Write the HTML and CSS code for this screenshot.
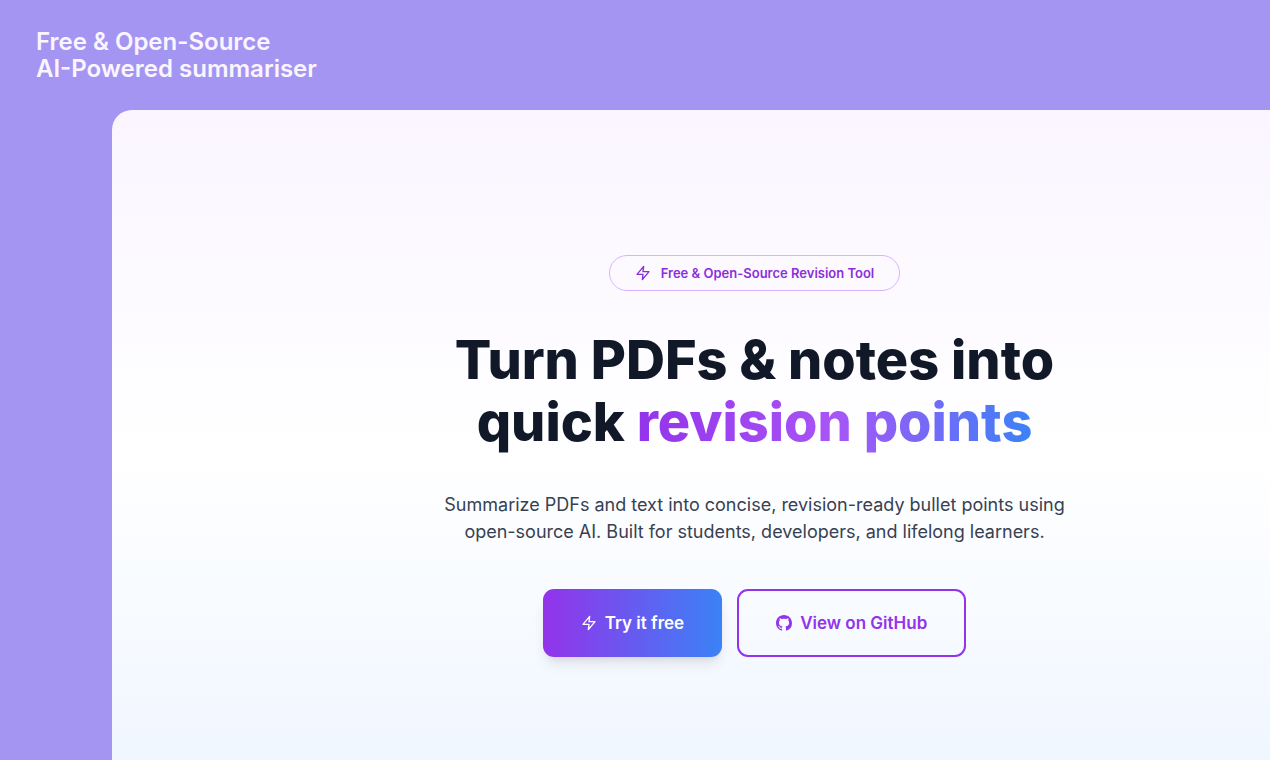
FILE: index.html
```html
<!DOCTYPE html>
<html lang="en">
<head>
  <meta charset="UTF-8" />
  <meta name="viewport" content="width=device-width, initial-scale=1.0" />
  <title>Free &amp; Open-Source AI-Powered summariser</title>
  <link rel="stylesheet" href="styles.css">
</head>
<body>
  <header class="banner">
    <p class="banner-title">Free &amp; Open-Source<br>AI-Powered summariser</p>
  </header>

  <main class="stage">
    <section class="hero">
      <div class="badge">
        <svg class="icon" viewBox="0 0 24 24" aria-hidden="true">
          <path d="M13 2 3 14h9l-1 8 10-12h-9l1-8z" />
        </svg>
        <span>Free &amp; Open-Source Revision Tool</span>
      </div>

      <h1>Turn PDFs &amp; notes into<br>quick <span class="highlight">revision points</span></h1>

      <p class="lead">Summarize PDFs and text into concise, revision-ready bullet points using<br>open-source AI. Built for students, developers, and lifelong learners.</p>

      <div class="actions">
        <a href="#try" class="btn btn-primary">
          <svg class="icon" viewBox="0 0 24 24" aria-hidden="true">
            <path d="M13 2 3 14h9l-1 8 10-12h-9l1-8z" />
          </svg>
          Try it free
        </a>
        <a href="#github" class="btn btn-outline">
          <svg class="icon icon-solid" viewBox="0 0 16 16" aria-hidden="true">
            <path d="M8 0C3.58 0 0 3.58 0 8c0 3.54 2.29 6.53 5.47 7.59.4.07.55-.17.55-.38 0-.19-.01-.82-.01-1.49-2.01.37-2.53-.49-2.69-.94-.09-.23-.48-.94-.82-1.13-.28-.15-.68-.52-.01-.53.63-.01 1.08.58 1.23.82.72 1.21 1.87.87 2.33.66.07-.52.28-.87.51-1.07-1.78-.2-3.64-.89-3.64-3.95 0-.87.31-1.59.82-2.15-.08-.2-.36-1.02.08-2.12 0 0 .67-.21 2.2.82.64-.18 1.32-.27 2-.27s1.36.09 2 .27c1.53-1.04 2.2-.82 2.2-.82.44 1.1.16 1.92.08 2.12.51.56.82 1.27.82 2.15 0 3.07-1.87 3.75-3.65 3.95.29.25.54.73.54 1.48 0 1.07-.01 1.93-.01 2.2 0 .21.15.46.55.38A8.01 8.01 0 0 0 16 8c0-4.42-3.58-8-8-8z" />
          </svg>
          View on GitHub
        </a>
      </div>
    </section>
  </main>
</body>
</html>
```
FILE: styles.css
```css
* {
  box-sizing: border-box;
}
body {
  margin: 0;
  min-height: 100vh;
  display: flex;
  flex-direction: column;
  font-family: 'Inter', sans-serif;
  background-color: #a495f2;
  color: #111827;
}
.banner {
  padding: 28px 36px;
}
.banner-title {
  margin: 0;
  font-size: 24px;
  font-weight: 600;
  line-height: 27px;
  color: #faf5ff;
}
.stage {
  flex: 1;
  display: flex;
  padding-left: 112px;
}
.hero {
  flex: 1;
  padding: 145px 32px 80px 159px;
  display: flex;
  flex-direction: column;
  align-items: center;
  text-align: center;
  border-top-left-radius: 20px;
  background: linear-gradient(to bottom, #faf5ff, #ffffff 53%, #eff6ff 104%);
}
.icon {
  width: 16px;
  height: 16px;
  flex: none;
  fill: none;
  stroke: currentColor;
  stroke-width: 2;
  stroke-linecap: round;
  stroke-linejoin: round;
}
.icon-solid {
  fill: currentColor;
  stroke: none;
}
.badge {
  display: flex;
  align-items: center;
  gap: 10px;
  height: 36px;
  padding: 0 25px;
  border: 1px solid #d8b4fe;
  border-radius: 18px;
  font-size: 13px;
  font-weight: 600;
  color: #8b2fdb;
}
h1 {
  margin: 38px 0 0;
  font-size: 54px;
  font-weight: 800;
  line-height: 62px;
}
.highlight {
  background: linear-gradient(to right, #9333ea, #a855f7 50%, #3b82f6);
  background-clip: text;
  -webkit-background-clip: text;
  color: transparent;
}
.lead {
  margin: 38px 0 0;
  font-size: 18px;
  line-height: 27px;
  color: #374151;
}
.actions {
  display: flex;
  gap: 15px;
  margin-top: 44px;
}
.btn {
  display: flex;
  align-items: center;
  gap: 8px;
  height: 68px;
  padding: 0 37px;
  border: 2px solid #9333ea;
  border-radius: 11px;
  font-size: 17px;
  font-weight: 600;
  color: #9333ea;
  text-decoration: none;
}
.btn-primary {
  padding: 0 38px;
  border: none;
  background: linear-gradient(to right, #9333ea, #3b82f6);
  color: #ffffff;
  box-shadow: 0 9px 14px -3px rgba(0, 0, 0, 0.1), 0 4px 6px -4px rgba(0, 0, 0, 0.1);
}
.btn:hover {
  opacity: 0.9;
}
```
